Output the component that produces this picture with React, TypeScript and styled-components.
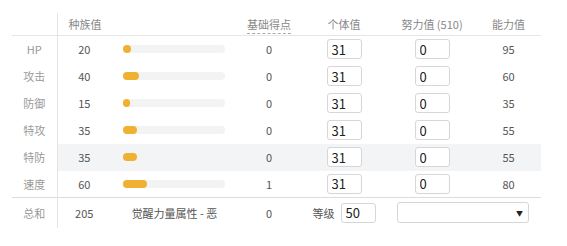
import styled, { createGlobalStyle } from 'styled-components';

const GlobalStyle = createGlobalStyle`
    body {
        margin: 0;
        background: #ffffff;
        font-family: "Noto Sans CJK SC", "Noto Sans", sans-serif;
    }
`;

interface StatRow {
    label: string;
    base: number;
    point: number;
    iv: number;
    ev: number;
    value: number;
}

const rows: StatRow[] = [
    { label: 'HP', base: 20, point: 0, iv: 31, ev: 0, value: 95 },
    { label: '攻击', base: 40, point: 0, iv: 31, ev: 0, value: 60 },
    { label: '防御', base: 15, point: 0, iv: 31, ev: 0, value: 35 },
    { label: '特攻', base: 35, point: 0, iv: 31, ev: 0, value: 55 },
    { label: '特防', base: 35, point: 0, iv: 31, ev: 0, value: 55 },
    { label: '速度', base: 60, point: 1, iv: 31, ev: 0, value: 80 },
];

const App = () => {
    return (
        <>
            <GlobalStyle />
            <Wrapper>
                <StatTable>
                    <colgroup>
                        <col style={{ width: '45px' }} />
                        <col style={{ width: '54px' }} />
                        <col style={{ width: '127px' }} />
                        <col style={{ width: '62px' }} />
                        <col style={{ width: '88px' }} />
                        <col style={{ width: '88px' }} />
                        <col style={{ width: '65px' }} />
                    </colgroup>
                    <thead>
                        <tr>
                            <LabelHead></LabelHead>
                            <HeadCell colSpan={2} $align="left">
                                种族值
                            </HeadCell>
                            <HeadCell>
                                <Dashed>基础得点</Dashed>
                            </HeadCell>
                            <HeadCell>个体值</HeadCell>
                            <HeadCell>努力值 (510)</HeadCell>
                            <HeadCell>能力值</HeadCell>
                        </tr>
                    </thead>
                    <tbody>
                        {rows.map((row) => (
                            <BodyRow key={row.label} $active={row.label === '特防'}>
                                <LabelCell>{row.label}</LabelCell>
                                <Cell>{row.base}</Cell>
                                <BarCell>
                                    <BarTrack>
                                        <BarFill style={{ width: `${Math.max(7, (row.base / 255) * 102)}px` }} />
                                    </BarTrack>
                                </BarCell>
                                <Cell>{row.point}</Cell>
                                <Cell>
                                    <NumInput defaultValue={row.iv} />
                                </Cell>
                                <Cell>
                                    <NumInput defaultValue={row.ev} />
                                </Cell>
                                <Cell>{row.value}</Cell>
                            </BodyRow>
                        ))}
                    </tbody>
                    <tfoot>
                        <FootRow>
                            <LabelCell>总和</LabelCell>
                            <Cell>205</Cell>
                            <Cell>觉醒力量属性 - 恶</Cell>
                            <Cell>0</Cell>
                            <Cell>
                                <LevelBox>
                                    <LevelLabel>等级</LevelLabel>
                                    <NumInput defaultValue={50} />
                                </LevelBox>
                            </Cell>
                            <SelectCell colSpan={2}>
                                <FakeSelect>
                                    <Arrow>▼</Arrow>
                                </FakeSelect>
                            </SelectCell>
                        </FootRow>
                    </tfoot>
                </StatTable>
            </Wrapper>
        </>
    );
};

export default App;

const Wrapper = styled.div`
    padding: 13px 0 0 12px;
`;

const StatTable = styled.table`
    border-collapse: collapse;
    table-layout: fixed;
    width: 529px;
    font-size: 11px;
    color: #555;
`;

const LabelHead = styled.th`
    height: 22px;
    padding: 0;
    border-right: 1px solid #e4e4e4;
    border-bottom: 1px solid #e6e6e6;
`;

const HeadCell = styled.th<{ $align?: string }>`
    height: 22px;
    padding: 0 0 0 ${(p) => (p.$align === 'left' ? '11px' : '0')};
    text-align: ${(p) => p.$align || 'center'};
    font-weight: normal;
    color: #888;
    vertical-align: middle;
    border-bottom: 1px solid #e6e6e6;
`;

const Dashed = styled.span`
    border-bottom: 1px dashed #aaa;
    padding-bottom: 1px;
`;

const BodyRow = styled.tr<{ $active?: boolean }>`
    height: 27px;
    td:not(:first-child) {
        background: ${(p) => (p.$active ? '#f3f4f6' : 'transparent')};
    }
`;

const FootRow = styled.tr`
    height: 30px;
    td {
        border-top: 1px solid #dcdcdc;
    }
`;

const LabelCell = styled.td`
    padding: 0;
    text-align: center;
    color: #999;
    border-right: 1px solid #e4e4e4;
`;

const Cell = styled.td`
    padding: 0;
    text-align: center;
    vertical-align: middle;
`;

const BarCell = styled.td`
    padding: 0 13px 0 12px;
    vertical-align: middle;
`;

const BarTrack = styled.div`
    height: 8px;
    width: 102px;
    border-radius: 4px;
    background: #f3f3f3;
`;

const BarFill = styled.div`
    height: 8px;
    border-radius: 4px;
    background: #f0b133;
`;

const NumInput = styled.input`
    box-sizing: border-box;
    width: 35px;
    height: 20px;
    padding: 0 4px;
    border: 1px solid #d6d6d6;
    border-radius: 3px;
    background: #fff;
    font-family: "Noto Sans CJK SC", "Noto Sans", sans-serif;
    font-size: 13px;
    color: #222;
    outline: none;
`;

const LevelBox = styled.div`
    display: flex;
    align-items: center;
    justify-content: center;
    gap: 6px;
`;

const LevelLabel = styled.span`
    color: #555;
`;

const SelectCell = styled.td`
    padding: 0 12px 0 9px;
    vertical-align: middle;
`;

const FakeSelect = styled.div`
    box-sizing: border-box;
    height: 21px;
    border: 1px solid #d6d6d6;
    border-radius: 3px;
    display: flex;
    align-items: center;
    justify-content: flex-end;
    padding-right: 5px;
`;

const Arrow = styled.span`
    font-size: 7px;
    color: #222;
`;
